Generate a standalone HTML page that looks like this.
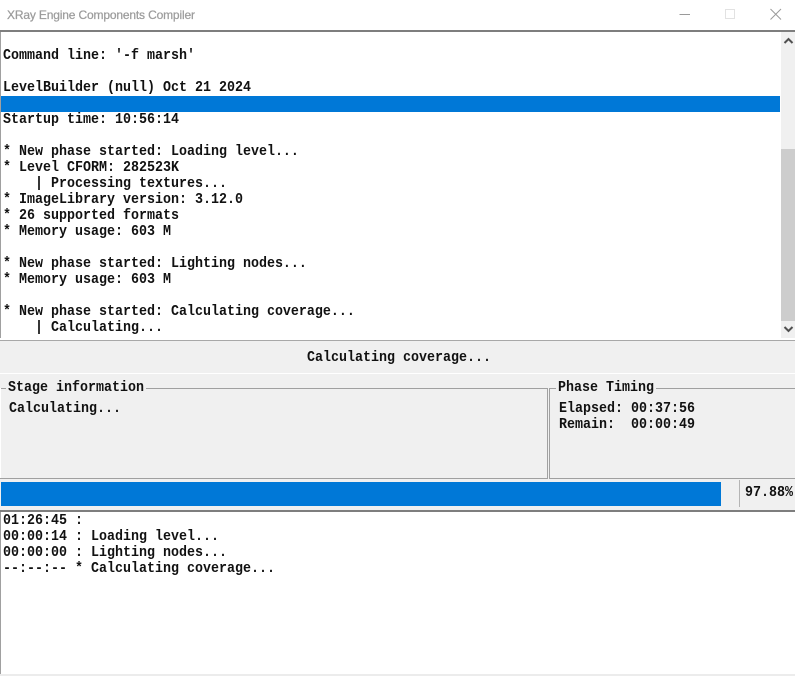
<!DOCTYPE html>
<html><head><meta charset="utf-8">
<style>
html,body{margin:0;padding:0;background:#fff;}
#p{position:relative;width:795px;height:676px;overflow:hidden;background:#fff;font-family:"Liberation Mono",monospace;font-weight:bold;font-size:13.33px;color:#111;}
#p div{position:absolute;}
.t{white-space:pre;line-height:16px;height:16px;margin-top:1px;transform:scaleY(1.1);transform-origin:0 12px;}
.h{height:1px;}
.v{width:1px;}
</style></head><body><div id="p">
<div style="left:7px;top:7px;white-space:pre;line-height:16px;font-family:'Liberation Sans',sans-serif;font-size:12px;font-weight:normal;color:#9c9c9c;letter-spacing:-.16px;-webkit-text-stroke:.25px #9c9c9c;">XRay Engine Components Compiler</div>
<svg style="position:absolute;left:670px;top:0" width="125" height="30" fill="none">
<path d="M9.5 14.5H20" stroke="#9a9a9a"/>
<rect x="55.5" y="9.5" width="9" height="9" stroke="#e2e2e2"/>
<path d="M100.5 9L111 19.5M111 9L100.5 19.5" stroke="#9a9a9a"/>
</svg>
<!-- main log -->
<div style="left:0;top:30px;width:795px;height:2px;background:#7e7e7e"></div>
<div style="left:0;top:32px;width:1px;height:307px;background:#a0a0a0"></div>
<div style="left:1px;top:96px;width:779px;height:16px;background:#0078d7"></div>
<div style="left:781px;top:32px;width:14px;height:306px;background:#f0f0f0"></div>
<div style="left:781px;top:149px;width:14px;height:172px;background:#cdcdcd"></div>
<svg style="position:absolute;left:781px;top:32px" width="14" height="306" fill="none" stroke="#505050" stroke-width="2">
<path d="M3.5 11L7.5 7L11.5 11"/>
<path d="M3.5 295L7.5 299L11.5 295"/>
</svg>
<div class="t" style="left:3px;top:48px">Command line: '-f marsh'</div>
<div class="t" style="left:3px;top:80px">LevelBuilder (null) Oct 21 2024</div>
<div class="t" style="left:3px;top:112px">Startup time: 10:56:14</div>
<div class="t" style="left:3px;top:144px">* New phase started: Loading level...</div>
<div class="t" style="left:3px;top:160px">* Level CFORM: 282523K</div>
<div class="t" style="left:3px;top:176px">    | Processing textures...</div>
<div class="t" style="left:3px;top:192px">* ImageLibrary version: 3.12.0</div>
<div class="t" style="left:3px;top:208px">* 26 supported formats</div>
<div class="t" style="left:3px;top:224px">* Memory usage: 603 M</div>
<div class="t" style="left:3px;top:256px">* New phase started: Lighting nodes...</div>
<div class="t" style="left:3px;top:272px">* Memory usage: 603 M</div>
<div class="t" style="left:3px;top:304px">* New phase started: Calculating coverage...</div>
<div class="t" style="left:3px;top:320px">    | Calculating...</div>
<!-- grey panel -->
<div style="left:0;top:338px;width:795px;height:173px;background:#f0f0f0"></div>
<div style="left:0;top:338px;width:795px;height:2px;background:#fff"></div>
<div style="left:0;top:340px;width:795px;height:1px;background:#a8a8a8"></div>
<div style="left:0;top:373px;width:795px;height:1px;background:#fff"></div>
<div class="t" style="left:307px;top:350px">Calculating coverage...</div>
<!-- groups -->
<div class="h" style="left:0;top:388px;width:6px;background:#a0a0a0"></div>
<div class="h" style="left:146px;top:388px;width:402px;background:#a0a0a0"></div>
<div class="v" style="left:547px;top:388px;height:91px;background:#a0a0a0"></div>
<div class="v" style="left:0;top:388px;height:91px;background:#fff"></div>
<div class="h" style="left:0;top:478px;width:548px;background:#a0a0a0"></div>
<div class="t" style="left:8px;top:380px;background:#f0f0f0">Stage information</div>
<div class="t" style="left:9px;top:401px">Calculating...</div>
<div class="h" style="left:549px;top:388px;width:7px;background:#a0a0a0"></div>
<div class="h" style="left:656px;top:388px;width:139px;background:#a0a0a0"></div>
<div class="v" style="left:549px;top:388px;height:91px;background:#a0a0a0"></div>
<div class="h" style="left:549px;top:478px;width:246px;background:#a0a0a0"></div>
<div class="t" style="left:558px;top:380px">Phase Timing</div>
<div class="t" style="left:559px;top:401px">Elapsed: 00:37:56</div>
<div class="t" style="left:559px;top:417px">Remain:  00:00:49</div>
<!-- progress -->
<div style="left:1px;top:482px;width:720px;height:24px;background:#0078d7"></div>
<div class="v" style="left:739px;top:480px;height:27px;background:#b4b4b4"></div>
<div class="t" style="left:745px;top:485px">97.88%</div>
<!-- bottom log -->
<div style="left:0;top:510px;width:795px;height:2px;background:#7e7e7e"></div>
<div style="left:0;top:512px;width:1px;height:162px;background:#a0a0a0"></div>
<div class="t" style="left:3px;top:513px">01:26:45 :</div>
<div class="t" style="left:3px;top:529px">00:00:14 : Loading level...</div>
<div class="t" style="left:3px;top:545px">00:00:00 : Lighting nodes...</div>
<div class="t" style="left:3px;top:561px">--:--:-- * Calculating coverage...</div>
<div style="left:0;top:674px;width:795px;height:2px;background:#ececec"></div>
</div></body></html>
